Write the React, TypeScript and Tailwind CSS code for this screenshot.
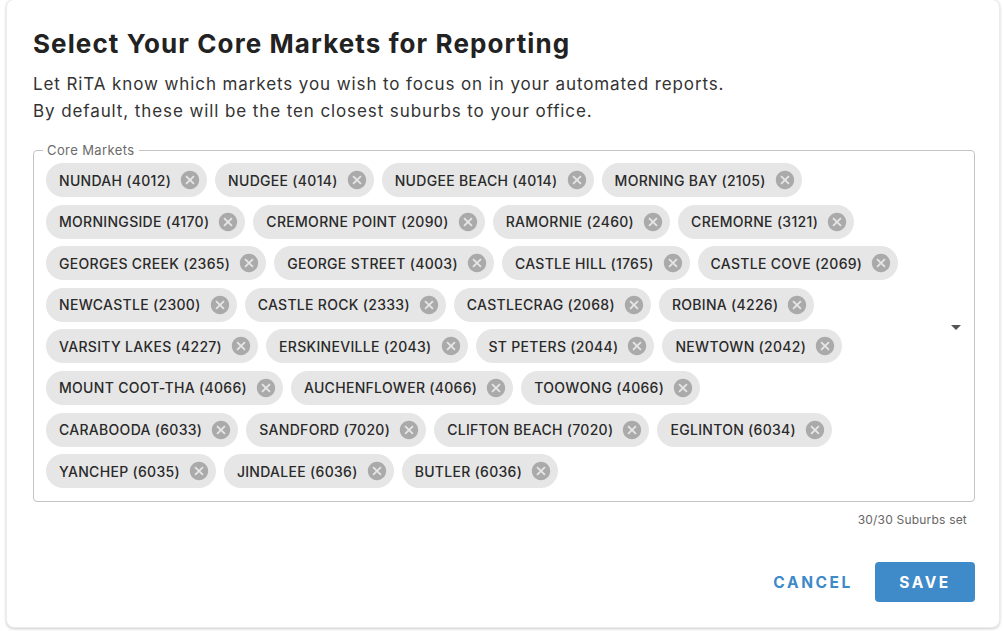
const rows: string[][] = [
  ['NUNDAH (4012)', 'NUDGEE (4014)', 'NUDGEE BEACH (4014)', 'MORNING BAY (2105)'],
  ['MORNINGSIDE (4170)', 'CREMORNE POINT (2090)', 'RAMORNIE (2460)', 'CREMORNE (3121)'],
  ['GEORGES CREEK (2365)', 'GEORGE STREET (4003)', 'CASTLE HILL (1765)', 'CASTLE COVE (2069)'],
  ['NEWCASTLE (2300)', 'CASTLE ROCK (2333)', 'CASTLECRAG (2068)', 'ROBINA (4226)'],
  ['VARSITY LAKES (4227)', 'ERSKINEVILLE (2043)', 'ST PETERS (2044)', 'NEWTOWN (2042)'],
  ['MOUNT COOT-THA (4066)', 'AUCHENFLOWER (4066)', 'TOOWONG (4066)'],
  ['CARABOODA (6033)', 'SANDFORD (7020)', 'CLIFTON BEACH (7020)', 'EGLINTON (6034)'],
  ['YANCHEP (6035)', 'JINDALEE (6036)', 'BUTLER (6036)'],
];

const CancelIcon = () => (
  <svg className="w-[22px] h-[22px] ml-[8px] mr-[6px] text-[#aaaaaa]" viewBox="0 0 24 24" fill="currentColor">
    <path d="M12 2C6.47 2 2 6.47 2 12s4.47 10 10 10 10-4.47 10-10S17.53 2 12 2zm5 13.59L15.59 17 12 13.41 8.41 17 7 15.59 10.59 12 7 8.41 8.41 7 12 10.59 15.59 7 17 8.41 13.41 12 17 15.59z" />
  </svg>
);

const Chip = ({ label }: { label: string }) => (
  <div className="flex items-center h-[34px] rounded-full bg-[#e6e6e6] pl-[13px]">
    <span className="text-[14px] font-medium text-[#2a2a2a] tracking-[0.3px] whitespace-nowrap">{label}</span>
    <CancelIcon />
  </div>
);

export default function App() {
  return (
    <div className="w-[1003px] h-[631px] bg-white overflow-hidden" style={{ fontFamily: 'Inter, "Noto Sans", sans-serif' }}>
      <div className="ml-[6px] w-[994px] h-[629px] -mt-px bg-white rounded-lg border border-[#ececec] shadow-[0_1px_3px_rgba(0,0,0,0.2)] pl-[26px] pr-[24px] pt-[29px]">
        {/* Header */}
        <h1 className="text-[26px] leading-[30px] font-bold text-[#222222] tracking-[1.1px]">Select Your Core Markets for Reporting</h1>
        <div className="mt-[12px] text-[17px] leading-[27px] text-[#333333] tracking-[0.9px]">
          <p>Let RiTA know which markets you wish to focus on in your automated reports.</p>
          <p>By default, these will be the ten closest suburbs to your office.</p>
        </div>

        {/* Core Markets field */}
        <fieldset className="relative mt-[20px] border border-[#c4c4c4] rounded-[4px] pl-[12px] pr-[40px] pt-[8px] pb-[13px] min-w-0">
          <legend className="-ml-[3px] px-[4px] text-[13px] leading-[10px] text-[#6b6b6b] tracking-[0.4px]">Core Markets</legend>
          <div className="flex flex-col gap-[7.6px]">
            {rows.map((row, i) => (
              <div key={i} className="flex gap-[8px]">
                {row.map(label => <Chip key={label} label={label} />)}
              </div>
            ))}
          </div>
          <svg className="absolute right-[6px] top-[160px] w-[24px] h-[24px] text-[#555555]" viewBox="0 0 24 24" fill="currentColor">
            <path d="M7 10l5 5 5-5z" />
          </svg>
        </fieldset>
        <div className="mt-[9px] pr-[8px] text-right text-[12px] text-[#666666] tracking-[0.2px]">30/30 Suburbs set</div>

        {/* Actions */}
        <div className="mt-[33px] flex justify-end items-center gap-[22px]">
          <button className="text-[15.5px] font-bold tracking-[2.6px] text-[#3d8ac9]">CANCEL</button>
          <button className="w-[100px] h-[40px] rounded-[4px] bg-[#3f8bc9] text-white text-[15.5px] font-bold tracking-[2.6px]">SAVE</button>
        </div>
      </div>
    </div>
  );
}
